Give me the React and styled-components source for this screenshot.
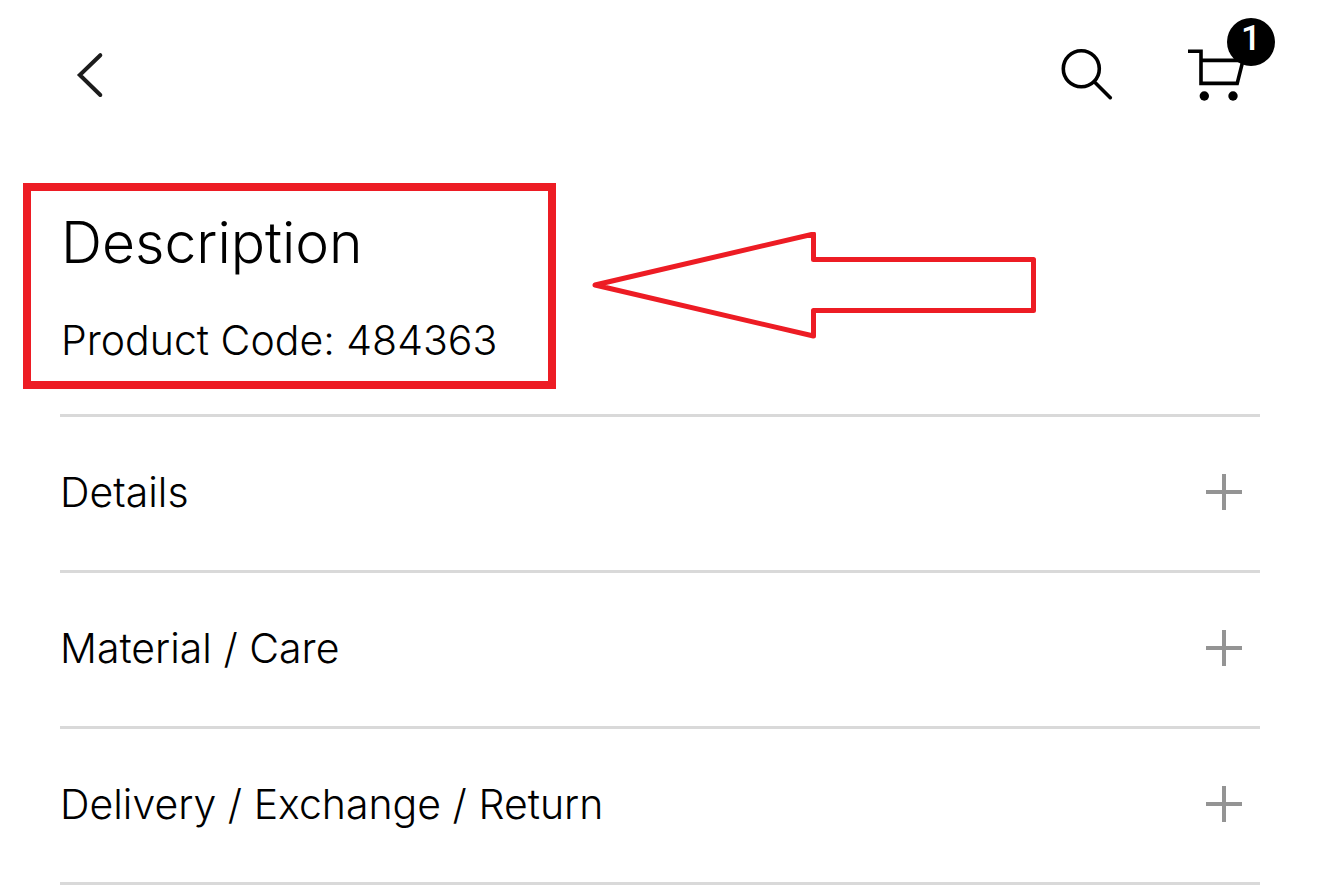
import React from "react";
import styled, { createGlobalStyle } from "styled-components";

const GlobalStyle = createGlobalStyle`
  * { box-sizing: border-box; }
  body {
    margin: 0;
    background: #fff;
    color: #000;
    font-family: Inter, "Liberation Sans", sans-serif;
    font-weight: 300;
  }
`;

const Page = styled.div`
  padding: 0 60px;
`;

const Header = styled.header`
  display: flex;
  align-items: center;
  justify-content: space-between;
  height: 150px;
  padding: 0 16px;
`;

const Actions = styled.div`
  display: flex;
  gap: 75px;
`;

const IconButton = styled.button`
  position: relative;
  display: block;
  padding: 0;
  border: 0;
  background: none;
  color: ${(p) => p.$color || "#000"};
  cursor: pointer;

  svg {
    display: block;
    overflow: visible;
  }
`;

const Badge = styled.span`
  position: absolute;
  top: -31px;
  right: -31px;
  width: 48px;
  height: 48px;
  border-radius: 50%;
  background: #000;
  color: #fff;
  font-family: Roboto, sans-serif;
  font-size: 35px;
  font-weight: 500;
  line-height: 42px;
  text-align: center;
`;

const Intro = styled.section`
  display: flex;
  align-items: center;
  gap: 36px;
  margin-left: -37px;
  padding: 33px 0 25px;
`;

const Highlight = styled.div`
  flex: 0 1 533px;
  padding: 16px 28px 16px 30px;
  border: 8px solid #ed1c24;
`;

const Title = styled.h1`
  margin: 0 0 36px;
  font-size: 57px;
  font-weight: 300;
  line-height: 72px;
`;

const Code = styled.p`
  margin: 0;
  font-size: 41px;
  line-height: 50px;
  white-space: nowrap;
`;

const Sections = styled.ul`
  margin: 0;
  padding: 0;
  border-top: 3px solid #d9d9d9;
  list-style: none;
`;

const Section = styled.li`
  border-bottom: 3px solid #d9d9d9;
`;

const SectionButton = styled.button`
  display: flex;
  align-items: center;
  justify-content: space-between;
  width: 100%;
  padding: 50px 18px 53px 0;
  border: 0;
  background: none;
  color: #000;
  font: inherit;
  font-size: 41px;
  line-height: 50px;
  text-align: left;
  cursor: pointer;
`;

const BackIcon = () => (
  <svg width="28" height="46" viewBox="0 0 28 46" fill="none" stroke="currentColor" strokeWidth="4" strokeLinecap="round" aria-hidden="true">
    <path d="M24.3 3.2 L3.8 23 L24.3 43" />
  </svg>
);

const SearchIcon = () => (
  <svg width="52" height="52" viewBox="0 0 52 52" fill="none" stroke="currentColor" strokeWidth="3.6" strokeLinecap="round" aria-hidden="true">
    <circle cx="20.3" cy="19.7" r="18" />
    <path d="M33.3 32.7 L49.3 48.7" />
  </svg>
);

const CartIcon = () => (
  <svg width="56" height="52" viewBox="0 0 56 52" aria-hidden="true">
    <path d="M0 2.2 H13 V34.4 H49.2 L55 11.4 H13" fill="none" stroke="currentColor" strokeWidth="3.6" />
    <circle cx="16.3" cy="47" r="4.7" />
    <circle cx="45" cy="47" r="4.7" />
  </svg>
);

const PlusIcon = () => (
  <svg width="36" height="36" viewBox="0 0 36 36" stroke="#949494" strokeWidth="4" aria-hidden="true">
    <path d="M18 0 V36 M0 18 H36" />
  </svg>
);

const Arrow = () => (
  <svg width="444" height="108" viewBox="0 0 444 108" fill="none" stroke="#ed1c24" strokeWidth="5" strokeLinejoin="round" aria-hidden="true">
    <path d="M3 53 L221.5 2 V27.5 H441.5 V78.5 H221.5 V104 Z" />
  </svg>
);

const sections = ["Details", "Material / Care", "Delivery / Exchange / Return"];

export default function App() {
  return (
    <Page>
      <GlobalStyle />
      <Header>
        <IconButton type="button" aria-label="Back" $color="#1c1c1c">
          <BackIcon />
        </IconButton>
        <Actions>
          <IconButton type="button" aria-label="Search">
            <SearchIcon />
          </IconButton>
          <IconButton type="button" aria-label="Shopping cart, 1 item">
            <CartIcon />
            <Badge>1</Badge>
          </IconButton>
        </Actions>
      </Header>
      <main>
        <Intro>
          <Highlight>
            <Title>Description</Title>
            <Code>Product Code: 484363</Code>
          </Highlight>
          <Arrow />
        </Intro>
        <Sections>
          {sections.map((name) => (
            <Section key={name}>
              <SectionButton type="button" aria-expanded="false">
                {name}
                <PlusIcon />
              </SectionButton>
            </Section>
          ))}
        </Sections>
      </main>
    </Page>
  );
}
